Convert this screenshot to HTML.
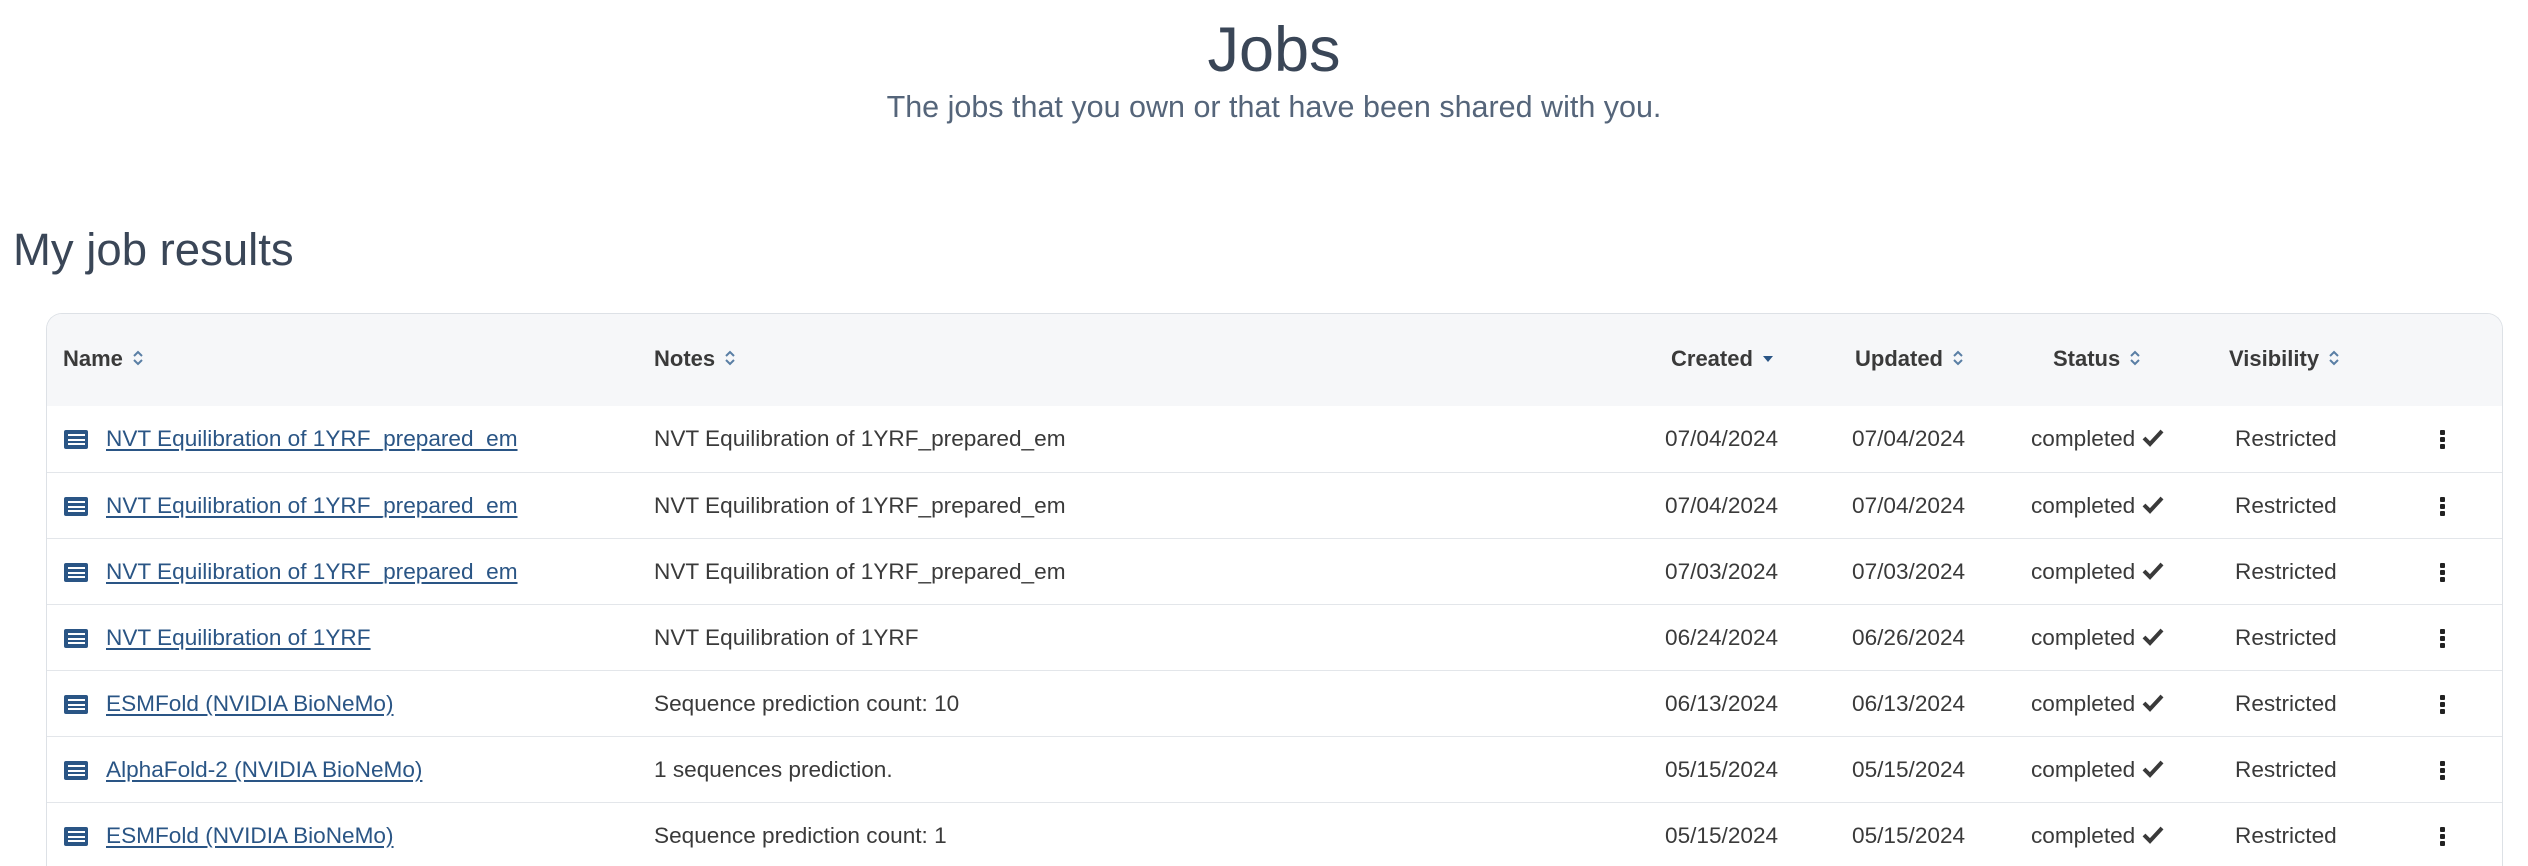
<!DOCTYPE html>
<html style="height:866px;overflow:hidden"><head><meta charset="utf-8"><style>
*{box-sizing:border-box;margin:0;padding:0}
body{width:2528px;height:866px;overflow:hidden;background:#fff;font-family:"Liberation Sans",sans-serif;color:#333;position:relative}
.t{position:absolute;white-space:nowrap}
h1{position:absolute;left:0;width:2548px;text-align:center;top:14px;font-size:63px;font-weight:normal;color:#3a4657}
.sub{position:absolute;left:0;width:2548px;text-align:center;top:90px;font-size:30.5px;color:#55657a}
.my{position:absolute;left:13px;top:224px;font-size:45.5px;font-weight:normal;color:#3a4657}
.box{position:absolute;left:46px;top:313px;width:2457px;height:553px;border:1.5px solid #dde1e6;border-bottom:none;border-radius:16px 16px 0 0;overflow:hidden}
.hd{position:absolute;left:0;top:0;right:0;height:92px;background:#f6f7f9}
.row{position:absolute;left:0;right:0;height:66px;border-top:1.5px solid #e3e6ea}
.h{font-size:22px;font-weight:bold;color:#3a3a3a;top:32px}
.c{font-size:22.6px;color:#3a3a3a;top:20px}
.a{color:#2a5585;text-decoration:underline;text-underline-offset:3px}
.s{display:inline-block;margin-left:9px;vertical-align:-1px}
.ic{position:absolute;left:17px;top:24px;width:24px;height:19px;background:#2a5585;border-radius:2px}
.ic i{position:absolute;left:4px;right:3px;height:2px;background:#fff}
.k{position:absolute;width:5px;height:5px;background:#222;border-radius:1px}
</style></head><body>
<h1>Jobs</h1>
<div class="sub">The jobs that you own or that have been shared with you.</div>
<div class="my">My job results</div>
<div class="box">
<div class="hd">
<div class="t h" style="left:16px">Name<svg class="s" width="12" height="18" viewBox="0 0 12 18"><path d="M2 7l4-4 4 4M2 11l4 4 4-4" fill="none" stroke="#5a7fa5" stroke-width="2"/></svg></div>
<div class="t h" style="left:607px">Notes<svg class="s" width="12" height="18" viewBox="0 0 12 18"><path d="M2 7l4-4 4 4M2 11l4 4 4-4" fill="none" stroke="#5a7fa5" stroke-width="2"/></svg></div>
<div class="t h" style="left:1624px">Created<svg class="s" width="12" height="18" viewBox="0 0 12 18"><path d="M1 7h10l-5 6z" fill="#2a5585"/></svg></div>
<div class="t h" style="left:1808px">Updated<svg class="s" width="12" height="18" viewBox="0 0 12 18"><path d="M2 7l4-4 4 4M2 11l4 4 4-4" fill="none" stroke="#5a7fa5" stroke-width="2"/></svg></div>
<div class="t h" style="left:2006px">Status<svg class="s" width="12" height="18" viewBox="0 0 12 18"><path d="M2 7l4-4 4 4M2 11l4 4 4-4" fill="none" stroke="#5a7fa5" stroke-width="2"/></svg></div>
<div class="t h" style="left:2182px">Visibility<svg class="s" width="12" height="18" viewBox="0 0 12 18"><path d="M2 7l4-4 4 4M2 11l4 4 4-4" fill="none" stroke="#5a7fa5" stroke-width="2"/></svg></div>
</div>
</div>
<script>
const rows=[
["NVT Equilibration of 1YRF_prepared_em","NVT Equilibration of 1YRF_prepared_em","07/04/2024","07/04/2024"],
["NVT Equilibration of 1YRF_prepared_em","NVT Equilibration of 1YRF_prepared_em","07/04/2024","07/04/2024"],
["NVT Equilibration of 1YRF_prepared_em","NVT Equilibration of 1YRF_prepared_em","07/03/2024","07/03/2024"],
["NVT Equilibration of 1YRF","NVT Equilibration of 1YRF","06/24/2024","06/26/2024"],
["ESMFold (NVIDIA BioNeMo)","Sequence prediction count: 10","06/13/2024","06/13/2024"],
["AlphaFold-2 (NVIDIA BioNeMo)","1 sequences prediction.","05/15/2024","05/15/2024"],
["ESMFold (NVIDIA BioNeMo)","Sequence prediction count: 1","05/15/2024","05/15/2024"]];
let h='';
rows.forEach((r,i)=>{h+=`<div class="row" style="top:${92+i*66}px;${i==0?'border-top:none':''}">
<div class="ic"><i style="top:4px"></i><i style="top:8.5px"></i><i style="top:13px"></i></div>
<div class="t c a" style="left:59px">${r[0]}</div>
<div class="t c" style="left:607px">${r[1]}</div>
<div class="t c" style="left:1618px">${r[2]}</div>
<div class="t c" style="left:1805px">${r[3]}</div>
<div class="t c" style="left:1984px">completed <svg width="22" height="18" viewBox="0 0 22 18" style="vertical-align:-1px"><path d="M2 9l6 6L20 2" fill="none" stroke="#3a3a3a" stroke-width="4"/></svg></div>
<div class="t c" style="left:2188px">Restricted</div>
<div class="k" style="left:2393px;top:24px"></div><div class="k" style="left:2393px;top:31px"></div><div class="k" style="left:2393px;top:38px"></div>
</div>`});
document.querySelector('.box').insertAdjacentHTML('beforeend',h);
</script>
</body></html>
